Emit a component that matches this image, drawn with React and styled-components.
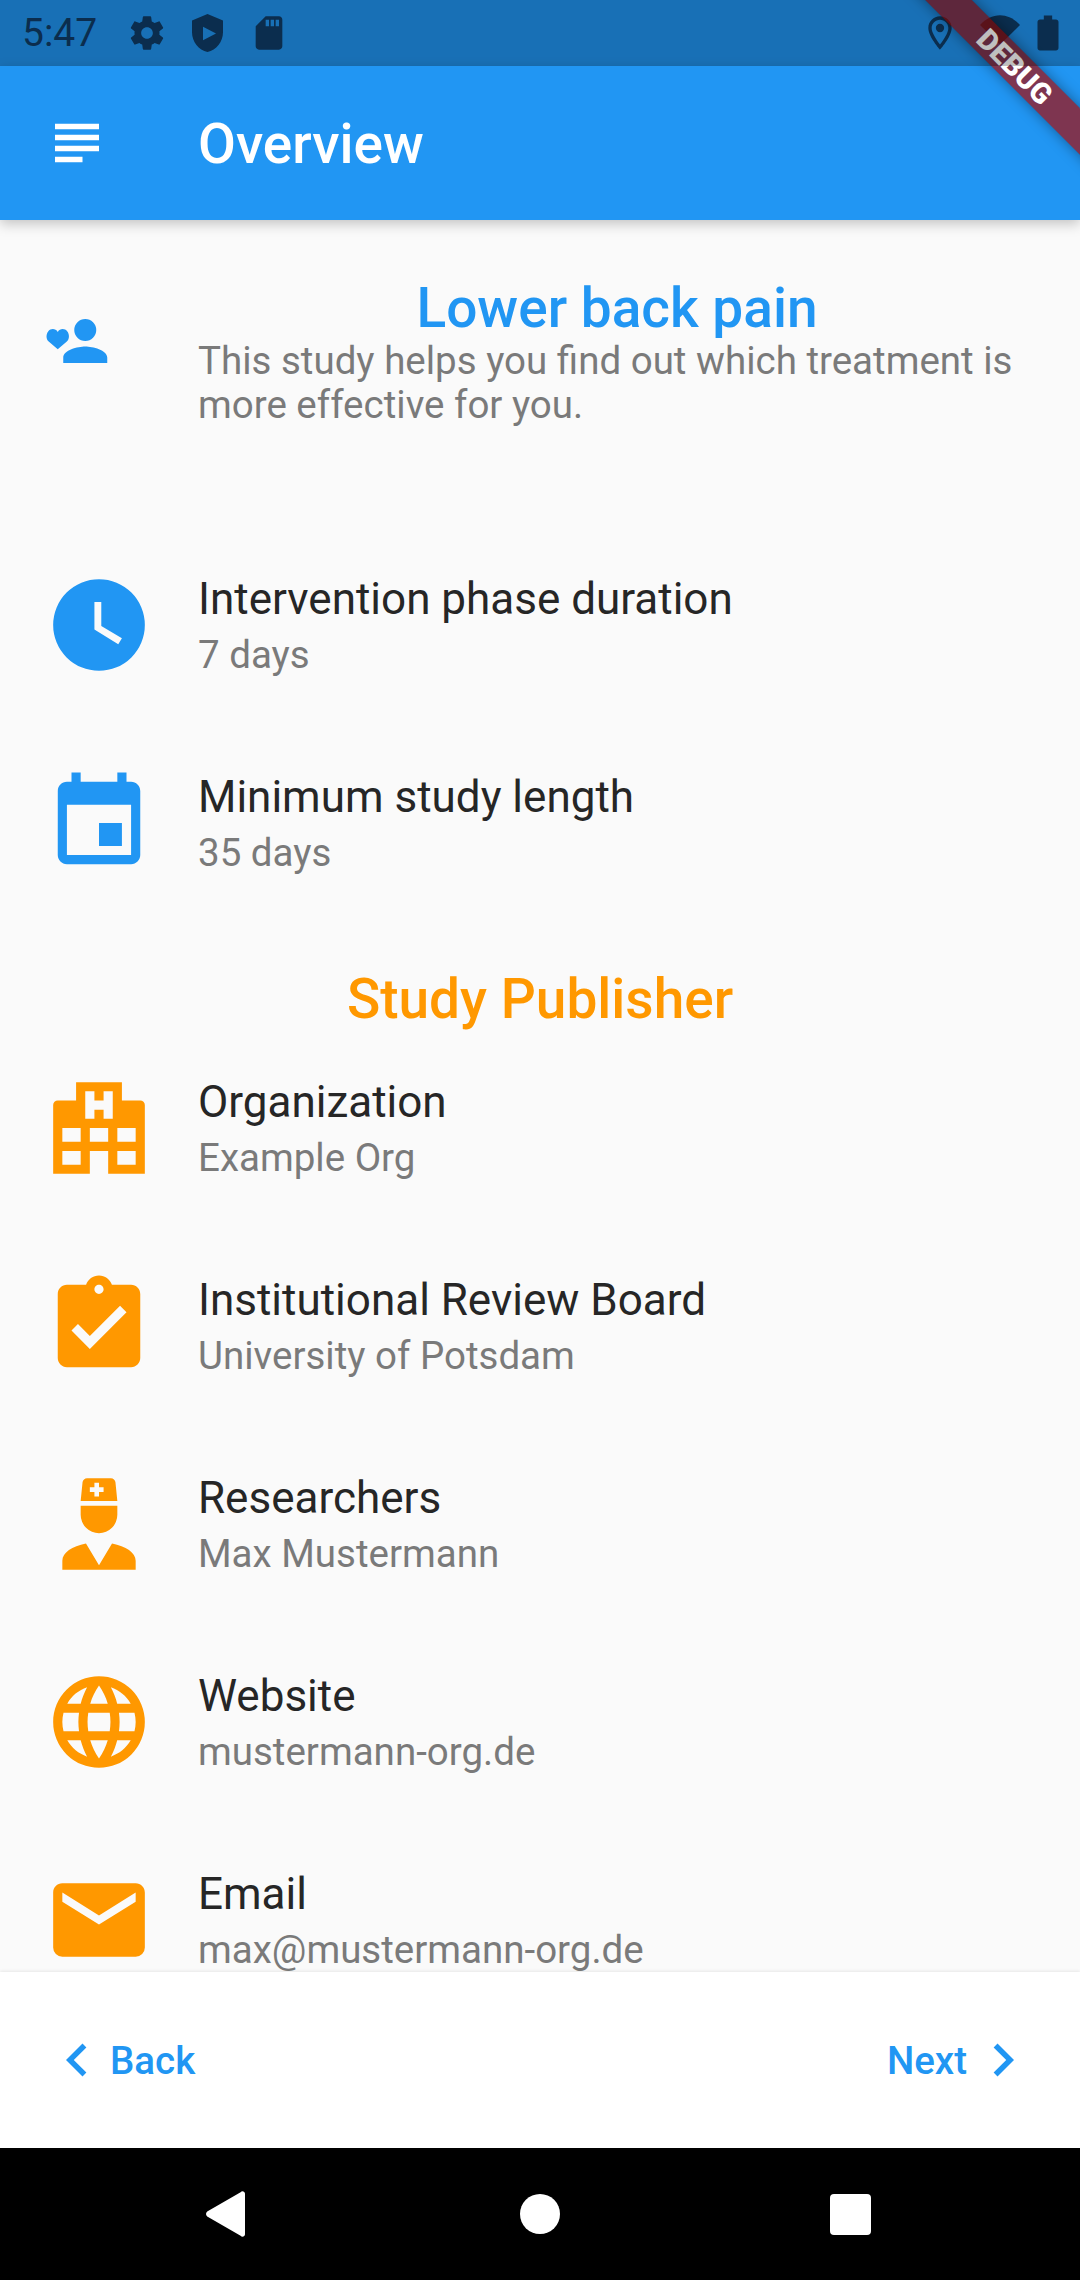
import React from "react";
import styled, { createGlobalStyle } from "styled-components";

const BLUE = "#2196F3";
const ORANGE = "#FF9800";

const paths = {
  settings:
    "M19.43 12.98c.04-.32.07-.64.07-.98s-.03-.66-.07-.98l2.11-1.65c.19-.15.24-.42.12-.64l-2-3.46c-.12-.22-.39-.3-.61-.22l-2.49 1c-.52-.4-1.08-.73-1.69-.98l-.38-2.65C14.46 2.18 14.25 2 14 2h-4c-.25 0-.46.18-.49.42l-.38 2.65c-.61.25-1.17.59-1.69.98l-2.49-1c-.23-.09-.49 0-.61.22l-2 3.46c-.13.22-.07.49.12.64l2.11 1.65c-.04.32-.07.65-.07.98s.03.66.07.98l-2.11 1.65c-.19.15-.24.42-.12.64l2 3.46c.12.22.39.3.61.22l2.49-1c.52.4 1.08.73 1.69.98l.38 2.65c.03.24.24.42.49.42h4c.25 0 .46-.18.49-.42l.38-2.65c.61-.25 1.17-.59 1.69-.98l2.49 1c.23.09.49 0 .61-.22l2-3.46c.12-.22.07-.49-.12-.64l-2.11-1.65zM12 15.5c-1.93 0-3.5-1.57-3.5-3.5s1.57-3.5 3.5-3.5 3.5 1.57 3.5 3.5-1.57 3.5-3.5 3.5z",
  shield: "M12.3.6L3 4.5v7c0 5.7 4 10.8 9.3 11.9 5.3-1.1 9.3-6.2 9.3-11.9v-7zM9.6 8.3l7.8 4-7.8 4z",
  sd: "M18 2h-8L4.02 8 4 20c0 1.1.9 2 2 2h12c1.1 0 2-.9 2-2V4c0-1.1-.9-2-2-2zm-6 6h-2V4h2v4zm3 0h-2V4h2v4zm3 0h-2V4h2v4z",
  location:
    "M12 2C8.13 2 5 5.13 5 9c0 5.25 7 13 7 13s7-7.75 7-13c0-3.87-3.13-7-7-7zM7 9c0-2.76 2.24-5 5-5s5 2.24 5 5c0 2.88-2.88 7.19-5 9.88C9.92 16.21 7 11.85 7 9zM12 6.5a2.5 2.5 0 1 0 0 5 2.5 2.5 0 0 0 0-5z",
  wifi: "M12 19L0 7.2C3.4 3.5 7.6 1.4 12 1.4s8.6 2.1 12 5.8z",
  battery:
    "M14.5 3.9V1.5h-5v2.4H7.2c-.8 0-1.5.7-1.5 1.5v15.6c0 .8.7 1.5 1.5 1.5h9.6c.8 0 1.5-.7 1.5-1.5V5.4c0-.8-.7-1.5-1.5-1.5z",
  menu: "M14 17H4v2h10v-2zm6-8H4v2h16V9zM4 15h16v-2H4v2zM4 5v2h16V5H4z",
  personHeart:
    "M15 4a4 4 0 1 0 0 8 4 4 0 0 0 0-8zM7 20v-2c0-2.7 5.3-4 8-4s8 1.3 8 4v2zM5 15l-3.3-2.8C.6 11.2.8 9.3 1.5 8.5 2.5 7.3 4.2 7.4 5 8.7 5.8 7.4 7.5 7.3 8.5 8.5c.7.8.9 2.7-.2 3.7z",
  clock:
    "M12,2A10,10 0 0,0 2,12A10,10 0 0,0 12,22A10,10 0 0,0 22,12A10,10 0 0,0 12,2M16.2,16.2L11,13V7H12.5V12.2L17,14.9L16.2,16.2Z",
  event:
    "M17 12h-5v5h5v-5zM16 1v2H8V1H6v2H5c-1.11 0-1.99.9-1.99 2L3 19c0 1.1.89 2 2 2h14c1.1 0 2-.9 2-2V5c0-1.1-.9-2-2-2h-1V1h-2zm3 18H5V8h14v11z",
  hospital:
    "M2,22V7a1,1 0 0 1 1-1H7V2H17V6H21a1,1 0 0 1 1 1V22H14V17H10V22ZM9,4v6h2V8h2v2h2V4h-2v2h-2V4ZM4,20H8V17H4ZM4,15H8V12H4ZM16,20H20V17H16ZM16,15H20V12H16ZM10,15H14V12H10Z",
  assignment:
    "M19 3h-4.18C14.4 1.84 13.3 1 12 1c-1.3 0-2.4.84-2.82 2H5c-1.1 0-2 .9-2 2v14c0 1.1.9 2 2 2h14c1.1 0 2-.9 2-2V5c0-1.1-.9-2-2-2zm-7 0c.55 0 1 .45 1 1s-.45 1-1 1-1-.45-1-1 .45-1 1-1zm-2 14l-4-4 1.41-1.41L10 14.17l6.59-6.59L18 9l-8 8z",
  doctor:
    "M14.84,16.26C17.86,16.83 20,18.29 20,20V22H4V20C4,18.29 6.14,16.83 9.16,16.26L12,21L14.84,16.26M8,8H16V10A4,4 0 0,1 12,14A4,4 0 0,1 8,10V8M8,7L8.41,2.9C8.46,2.39 8.89,2 9.41,2H14.6C15.11,2 15.54,2.39 15.59,2.9L16,7H8M12,3H11V4H10V5H11V6H12V5H13V4H12V3Z",
  web: "M16.36,14C16.44,13.34 16.5,12.68 16.5,12C16.5,11.32 16.44,10.66 16.36,10H19.74C19.9,10.64 20,11.31 20,12C20,12.69 19.9,13.36 19.74,14M14.59,19.56C15.19,18.45 15.65,17.25 15.97,16H18.92C17.96,17.65 16.43,18.93 14.59,19.56M14.34,14H9.66C9.56,13.34 9.5,12.68 9.5,12C9.5,11.32 9.56,10.65 9.66,10H14.34C14.43,10.65 14.5,11.32 14.5,12C14.5,12.68 14.43,13.34 14.34,14M12,19.96C11.17,18.76 10.5,17.43 10.09,16H13.91C13.5,17.43 12.83,18.76 12,19.96M8,8H5.08C6.03,6.34 7.57,5.06 9.4,4.44C8.8,5.55 8.35,6.75 8,8M5.08,16H8C8.35,17.25 8.8,18.45 9.4,19.56C7.57,18.93 6.03,17.65 5.08,16M4.26,14C4.1,13.36 4,12.69 4,12C4,11.31 4.1,10.64 4.26,10H7.64C7.56,10.66 7.5,11.32 7.5,12C7.5,12.68 7.56,13.34 7.64,14M12,4.03C12.83,5.23 13.5,6.57 13.91,8H10.09C10.5,6.57 11.17,5.23 12,4.03M18.92,8H15.97C15.65,6.75 15.19,5.55 14.59,4.44C16.43,5.07 17.96,6.34 18.92,8M12,2C6.47,2 2,6.5 2,12A10,10 0 0,0 12,22A10,10 0 0,0 22,12A10,10 0 0,0 12,2Z",
  email:
    "M20,8L12,13L4,8V6L12,11L20,6M20,4H4C2.89,4 2,4.89 2,6V18A2,2 0 0,0 4,20H20A2,2 0 0,0 22,18V6C22,4.89 21.1,4 20,4Z",
  chevronLeft: "M15.41 7.41L14 6l-6 6 6 6 1.41-1.41L10.83 12z",
  chevronRight: "M10 6L8.59 7.41 13.17 12l-4.58 4.58L10 18l6-6z",
};

const Icon = ({ name, className }) => (
  <svg className={className} viewBox="0 0 24 24">
    <path d={paths[name]} fill="currentColor" fillRule="evenodd" />
  </svg>
);

const studyRows = [
  { icon: "clock", title: "Intervention phase duration", sub: "7 days" },
  { icon: "event", title: "Minimum study length", sub: "35 days" },
];

const publisherRows = [
  { icon: "hospital", title: "Organization", sub: "Example Org" },
  { icon: "assignment", title: "Institutional Review Board", sub: "University of Potsdam" },
  { icon: "doctor", title: "Researchers", sub: "Max Mustermann" },
  { icon: "web", title: "Website", sub: "mustermann-org.de" },
  { icon: "email", title: "Email", sub: "max@mustermann-org.de" },
];

export default function App() {
  return (
    <Page>
      <GlobalStyle />
      <StatusBar>
        <StatusGroup>
          <Time>5:47</Time>
          <SysIcon name="settings" />
          <SysIcon name="shield" />
          <SdIcon name="sd" />
        </StatusGroup>
        <StatusGroup>
          <SysIcon name="location" />
          <WifiIcon name="wifi" />
          <SysIcon name="battery" />
        </StatusGroup>
      </StatusBar>

      <AppBar>
        <MenuIcon name="menu" />
        <AppTitle>Overview</AppTitle>
      </AppBar>

      <Content>
        <HeaderTile>
          <HeaderIcon name="personHeart" />
          <HeaderText>
            <StudyTitle>Lower back pain</StudyTitle>
            <StudyDescription>
              This study helps you find out which treatment is more effective for you.
            </StudyDescription>
          </HeaderText>
        </HeaderTile>

        {studyRows.map((row) => (
          <InfoRow key={row.title} row={row} color={BLUE} />
        ))}

        <SectionTitle>Study Publisher</SectionTitle>

        {publisherRows.map((row) => (
          <InfoRow key={row.title} row={row} color={ORANGE} />
        ))}
      </Content>

      <BottomBar>
        <NavButton>
          <NavIcon name="chevronLeft" />
          Back
        </NavButton>
        <NavButton>
          Next
          <NextIcon name="chevronRight" />
        </NavButton>
      </BottomBar>

      <SystemNav>
        <svg width="39" height="46" viewBox="0 0 39 46">
          <path
            d="M34.6 1.2c1.5-1.7 4.4-.7 4.4 1.6v40.4c0 2.3-2.9 3.3-4.4 1.6L1.2 25.6c-1.6-1.5-1.6-3.7 0-5.2z"
            fill="#fff"
          />
        </svg>
        <HomeDot />
        <RecentsSquare />
      </SystemNav>

      <DebugBanner>DEBUG</DebugBanner>
      <StatusScrim />
    </Page>
  );
}

function InfoRow({ row, color }) {
  return (
    <Tile>
      <LeadIcon name={row.icon} $color={color} />
      <TileText>
        <TileTitle>{row.title}</TileTitle>
        <TileSub>{row.sub}</TileSub>
      </TileText>
    </Tile>
  );
}

const GlobalStyle = createGlobalStyle`
  html, body {
    margin: 0;
    padding: 0;
    background: #fafafa;
  }
  * {
    box-sizing: border-box;
  }
`;

const Page = styled.div`
  position: relative;
  width: 1080px;
  height: 2280px;
  display: flex;
  flex-direction: column;
  overflow: hidden;
  background: #fafafa;
  font-family: Roboto, "Liberation Sans", sans-serif;
`;

const StatusBar = styled.div`
  height: 66px;
  flex-shrink: 0;
  padding: 0 12px 0 22px;
  display: flex;
  align-items: center;
  justify-content: space-between;
  background: ${BLUE};
  color: #0f3d68;
`;

// the dark layer of the system bar also dims the debug ribbon
const StatusScrim = styled.div`
  position: absolute;
  z-index: 6;
  top: 0;
  left: 0;
  width: 100%;
  height: 66px;
  background: rgba(0, 0, 0, 0.25);
`;

const StatusGroup = styled.div`
  display: flex;
  align-items: center;
  gap: 20px;
`;

const Time = styled.span`
  width: 85px;
  font-size: 39px;
  line-height: 66px;
`;

const SysIcon = styled(Icon)`
  width: 40px;
  height: 40px;
`;

const SdIcon = styled(SysIcon)`
  margin-left: 2px;
`;

const WifiIcon = styled(SysIcon)`
  margin-right: -11.5px;
`;

const AppBar = styled.header`
  position: relative;
  z-index: 2;
  height: 154px;
  flex-shrink: 0;
  padding-left: 44px;
  display: flex;
  align-items: center;
  gap: 88px;
  background: ${BLUE};
  color: #fff;
  box-shadow: 0 4px 12px rgba(0, 0, 0, 0.22);
`;

const MenuIcon = styled(Icon)`
  width: 66px;
  height: 66px;
`;

const AppTitle = styled.h1`
  margin: 0;
  padding-top: 2px;
  font-size: 55px;
  font-weight: 500;
`;

const Content = styled.main`
  flex: 1;
  min-height: 0;
  overflow: hidden;
`;

const HeaderTile = styled.section`
  height: 306px;
  padding: 58px 44px 0;
  display: flex;
  gap: 88px;
`;

const HeaderIcon = styled(Icon)`
  width: 66px;
  height: 66px;
  margin-top: 30px;
  flex-shrink: 0;
  color: ${BLUE};
`;

const HeaderText = styled.div`
  flex: 1;
`;

const StudyTitle = styled.h2`
  margin: 0 0 1px;
  font-size: 55px;
  line-height: 60px;
  font-weight: 500;
  text-align: center;
  color: ${BLUE};
`;

const StudyDescription = styled.p`
  margin: 0;
  font-size: 38.5px;
  line-height: 44px;
  color: #7a7a7a;
`;

const Tile = styled.div`
  height: 198px;
  padding: 0 44px;
  display: flex;
  align-items: center;
  gap: 44px;
`;

const LeadIcon = styled(Icon)`
  width: 110px;
  height: 110px;
  flex-shrink: 0;
  color: ${(props) => props.$color};
`;

const TileText = styled.div`
  display: flex;
  flex-direction: column;
  padding-top: 8px;
`;

const TileTitle = styled.span`
  font-size: 44px;
  line-height: 52px;
  color: #262626;
`;

const TileSub = styled.span`
  font-size: 38.5px;
  line-height: 60px;
  color: #7a7a7a;
`;

const SectionTitle = styled.h2`
  height: 107px;
  margin: 0;
  padding-top: 45px;
  font-size: 55px;
  line-height: 64px;
  font-weight: 500;
  text-align: center;
  color: ${ORANGE};
`;

const BottomBar = styled.footer`
  position: relative;
  z-index: 1;
  height: 176px;
  flex-shrink: 0;
  padding: 0 44px;
  display: flex;
  align-items: center;
  justify-content: space-between;
  background: #fff;
  box-shadow: 0 -1px 3px rgba(0, 0, 0, 0.08);
`;

const NavButton = styled.div`
  display: flex;
  align-items: center;
  font-size: 38.5px;
  font-weight: 500;
  color: ${BLUE};
`;

const NavIcon = styled(Icon)`
  width: 66px;
  height: 66px;
`;

const NextIcon = styled(NavIcon)`
  margin-left: 3px;
`;

const SystemNav = styled.nav`
  height: 132px;
  flex-shrink: 0;
  padding: 0 209px 0 206px;
  display: flex;
  align-items: center;
  justify-content: space-between;
  background: #000;
`;

const HomeDot = styled.div`
  width: 40px;
  height: 40px;
  margin-left: 4px;
  border-radius: 50%;
  background: #fff;
`;

const RecentsSquare = styled.div`
  width: 41px;
  height: 41px;
  border-radius: 4px;
  background: #fff;
`;

const DebugBanner = styled.div`
  position: absolute;
  z-index: 5;
  top: 50px;
  right: -85px;
  width: 300px;
  height: 33px;
  display: flex;
  align-items: center;
  justify-content: center;
  transform: rotate(45deg);
  background: rgba(171, 7, 3, 0.68);
  box-shadow: 0 0 14px rgba(0, 0, 0, 0.4);
  font-size: 29px;
  font-weight: 900;
  color: #fff;
`;
